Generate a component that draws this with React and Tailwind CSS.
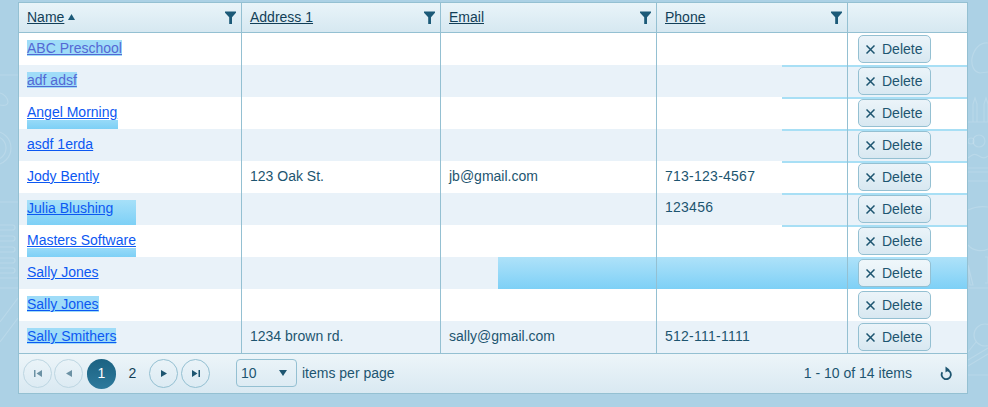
import React from "react";

const FONT = "font-['Liberation_Sans',Arial,sans-serif]";

const rows = [
  { name: "ABC Preschool", sel: "text" , purple: true },
  { name: "adf adsf", sel: "text", purple: true, },
  { name: "Angel Morning", under: "w-[91px] h-[9px]" },
  { name: "asdf 1erda" },
  { name: "Jody Bently", addr: "123 Oak St.", email: "jb@gmail.com", phone: "713-123-4567" },
  { name: "Julia Blushing", block: true, phone: "123456" },
  { name: "Masters Software", under: "w-[109px] h-[9px]" },
  { name: "Sally Jones", full: true },
  { name: "Sally Jones", sel: "text" },
  { name: "Sally Smithers", sel: "text", addr: "1234 brown rd.", email: "sally@gmail.com", phone: "512-111-1111" },
];

function FilterIcon() {
  return (
    <svg width="11" height="13" viewBox="0 0 11 13" className="text-[#1c5a78]">
      <path d="M0 0.5h11v1.2L7 6.2V13H4.2V6.2L0 1.7z" fill="currentColor" />
    </svg>
  );
}

function HeaderCell({ label, sorted, filter = true, last }) {
  return (
    <div className={`flex items-center justify-between pl-[8px] pr-[5px] ${last ? "" : "border-r border-[#94c0d2]"}`}>
      <span className="flex items-center gap-[4px]">
        {label && <span className="underline text-[#123f58]">{label}</span>}
        {sorted && (
          <svg width="7" height="6" viewBox="0 0 7 6" className="mb-[1px]">
            <path d="M3.5 0l3.5 6H0z" fill="#1c5a78" />
          </svg>
        )}
      </span>
      {filter && label && <FilterIcon />}
    </div>
  );
}

function DeleteButton({ active }) {
  return (
    <button
      className={`flex items-center w-[73px] h-[28px] rounded-[5px] border border-[#94c0d2] pl-[7px] gap-[7px] text-[14px] text-[#1d5570] bg-gradient-to-b ${
        active ? "from-[#eff7fb] to-[#e0edf4]" : "from-[#ebf4f9] to-[#d8e8f1]"
      }`}
    >
      <svg width="9" height="9" viewBox="0 0 9 9">
        <path d="M0.5 0.5l8 8M8.5 0.5l-8 8" stroke="#1d5570" strokeWidth="1.5" fill="none" />
      </svg>
      <span>Delete</span>
    </button>
  );
}

function Row({ r, i }) {
  const textCls = r.purple ? "text-[#5468d4]" : "text-[#0c58f2]";
  return (
    <div className={`relative h-[32px] ${i % 2 ? "bg-[#e9f2f9]" : "bg-white"}`}>
      {r.full && (
        <div className="absolute left-[479px] right-0 top-0 bottom-0 bg-gradient-to-b from-[#aee2f9] to-[#7dd0f6]" />
      )}
      {i >= 1 && i <= 6 && (
        <div className="absolute left-[763px] right-0 top-0 h-[2px] bg-[#a8dff5]" />
      )}
      {r.block && (
        <div className="absolute left-[8px] top-[7px] bottom-0 w-[109px] bg-gradient-to-b from-[#a6e0f9] to-[#7dd0f6]" />
      )}
      {r.under && (
        <div className={`absolute left-[8px] bottom-0 bg-gradient-to-b from-[#97daf8] to-[#7dd0f6] ${r.under}`} />
      )}
      <div className="relative grid grid-cols-[223px_199px_216px_191px_119px] h-full">
        <div className="border-r border-[#94c0d2] pl-[8px] pt-[7px] leading-[16px]">
          <a className={`underline block w-fit h-[16px] ${textCls} ${r.sel ? "bg-[#9fdcf8]" : ""}`}>{r.name}</a>
        </div>
        <div className="border-r border-[#94c0d2] pl-[8px] pt-[7px] leading-[16px]">{r.addr}</div>
        <div className="border-r border-[#94c0d2] pl-[8px] pt-[7px] leading-[16px]">{r.email}</div>
        <div className={`border-r border-[#94c0d2] pl-[8px] leading-[16px] tracking-[0.25px] ${r.block ? "pt-[6px]" : "pt-[7px]"}`}>{r.phone}</div>
        <div className="pl-[10px] pt-[2px]">
          <DeleteButton active={r.full} />
        </div>
      </div>
    </div>
  );
}

function PagerButton({ children, dim }) {
  return (
    <button className={`flex items-center justify-center w-[29px] h-[29px] rounded-full border ${dim ? "border-[#bdd6e2]" : "border-[#94c0d2]"}`}>
      {children}
    </button>
  );
}

function Decor() {
  return (
    <svg width="988" height="407" className="absolute inset-0" fill="none" stroke="#ffffff" strokeOpacity="0.16" strokeWidth="1.2">
      <path d="M0 75h18M0 93c4 1 8 5 8 9 0 3-3 4-8 3" />
      <circle cx="-6" cy="148" r="17" />
      <circle cx="-6" cy="148" r="12" />
      <path d="M0 202h18M0 278h18M0 288h18M0 342l18-24M0 322l18-24" />
      <rect x="-8" y="225" width="23" height="5" rx="2.5" />
      <rect x="-8" y="236" width="23" height="5" rx="2.5" />
      <rect x="-8" y="247" width="23" height="5" rx="2.5" />
      <rect x="-8" y="258" width="23" height="5" rx="2.5" />
      <rect x="-8" y="268" width="23" height="5" rx="2.5" />
      <path d="M988 43c-8-1-14 6-16 15-1 8 2 14 8 15l8-1" />
      <path d="M973 122V104l2-6 2 6v18M984 122V104l2-6 2 6v18M968 122h20" />
      <circle cx="979" cy="141" r="6" />
      <circle cx="971" cy="141" r="3" />
      <path d="M968 158c6-5 8-4 11-2s6 3 9 0M968 168h20M968 172h20M968 181h20" />
      <path d="M968 210c6-3 14-4 20-3M968 245c5 6 14 7 20 4" />
      <path d="M968 265l5 20h-3zM985 257h3v26h-3M968 288h20" />
      <circle cx="985" cy="335" r="11" />
      <path d="M976 342l-8 10M968 360l20-12M968 366l20-12M968 375h20" />
    </svg>
  );
}

export default function App() {
  return (
    <div className={`relative w-[988px] h-[407px] overflow-hidden bg-[#acd1e5] ${FONT} text-[14px] text-[#1d5570]`}>
      <Decor />
      <div className="relative ml-[18px] mt-[2px] w-[950px] border border-[#94c0d2]">
        <div className="grid grid-cols-[223px_199px_216px_191px_119px] h-[30px] border-b border-[#94c0d2] bg-gradient-to-b from-[#e9f4f9] to-[#d6e8f1]">
          <HeaderCell label="Name" sorted />
          <HeaderCell label="Address 1" />
          <HeaderCell label="Email" />
          <HeaderCell label="Phone" />
          <HeaderCell last filter={false} />
        </div>
        <div>
          {rows.map((r, i) => (
            <Row key={i} r={r} i={i} />
          ))}
        </div>
        <div className="flex items-center h-[40px] border-t border-[#94c0d2] bg-gradient-to-b from-[#edf5f9] to-[#d9e9f2] pl-[4px] pr-[15px]">
          <div className="flex items-center gap-[2px]">
            <PagerButton dim>
              <svg width="8" height="7" viewBox="0 0 8 7" className="opacity-60"><path d="M0 0h1.5v7H0zM8 0v7L2.5 3.5z" fill="#1d5570" /></svg>
            </PagerButton>
            <PagerButton dim>
              <svg width="6" height="7" viewBox="0 0 6 7" className="opacity-60"><path d="M6 0v7L0 3.5z" fill="#1d5570" /></svg>
            </PagerButton>
            <span className="ml-[2px] flex items-center justify-center w-[29px] h-[30px] rounded-full bg-gradient-to-b from-[#1b6282] to-[#2e7a9c] text-white">1</span>
            <span className="flex items-center justify-center w-[29px] h-[30px] text-[#123f58]">2</span>
            <PagerButton>
              <svg width="6" height="7" viewBox="0 0 6 7"><path d="M0 0v7l6-3.5z" fill="#1d5570" /></svg>
            </PagerButton>
            <span className="w-0 -mr-[1px]" />
            <PagerButton>
              <svg width="8" height="7" viewBox="0 0 8 7"><path d="M0 0v7l5.5-3.5zM6.5 0H8v7H6.5z" fill="#1d5570" /></svg>
            </PagerButton>
          </div>
          <div className="ml-[26px] mb-[1px] flex items-center justify-between w-[61px] h-[28px] rounded-[4px] border border-[#94c0d2] pl-[4px] pr-[9px] text-[#1d5570]">
            <span>10</span>
            <svg width="8" height="6" viewBox="0 0 8 6"><path d="M0 0h8L4 6z" fill="#1d5570" /></svg>
          </div>
          <span className="ml-[5px]">items per page</span>
          <span className="ml-auto">1 - 10 of 14 items</span>
          <svg width="12" height="14" viewBox="0 0 12 14" className="ml-[28px] mb-[2px]" fill="none">
            <path d="M6.5 4a4.6 4.6 0 1 1-4.2 2.2" stroke="#1d5570" strokeWidth="1.8" />
            <path d="M5.5 0.5L9.5 3.5L5.5 6.5z" fill="#1d5570" />
          </svg>
        </div>
      </div>
    </div>
  );
}
